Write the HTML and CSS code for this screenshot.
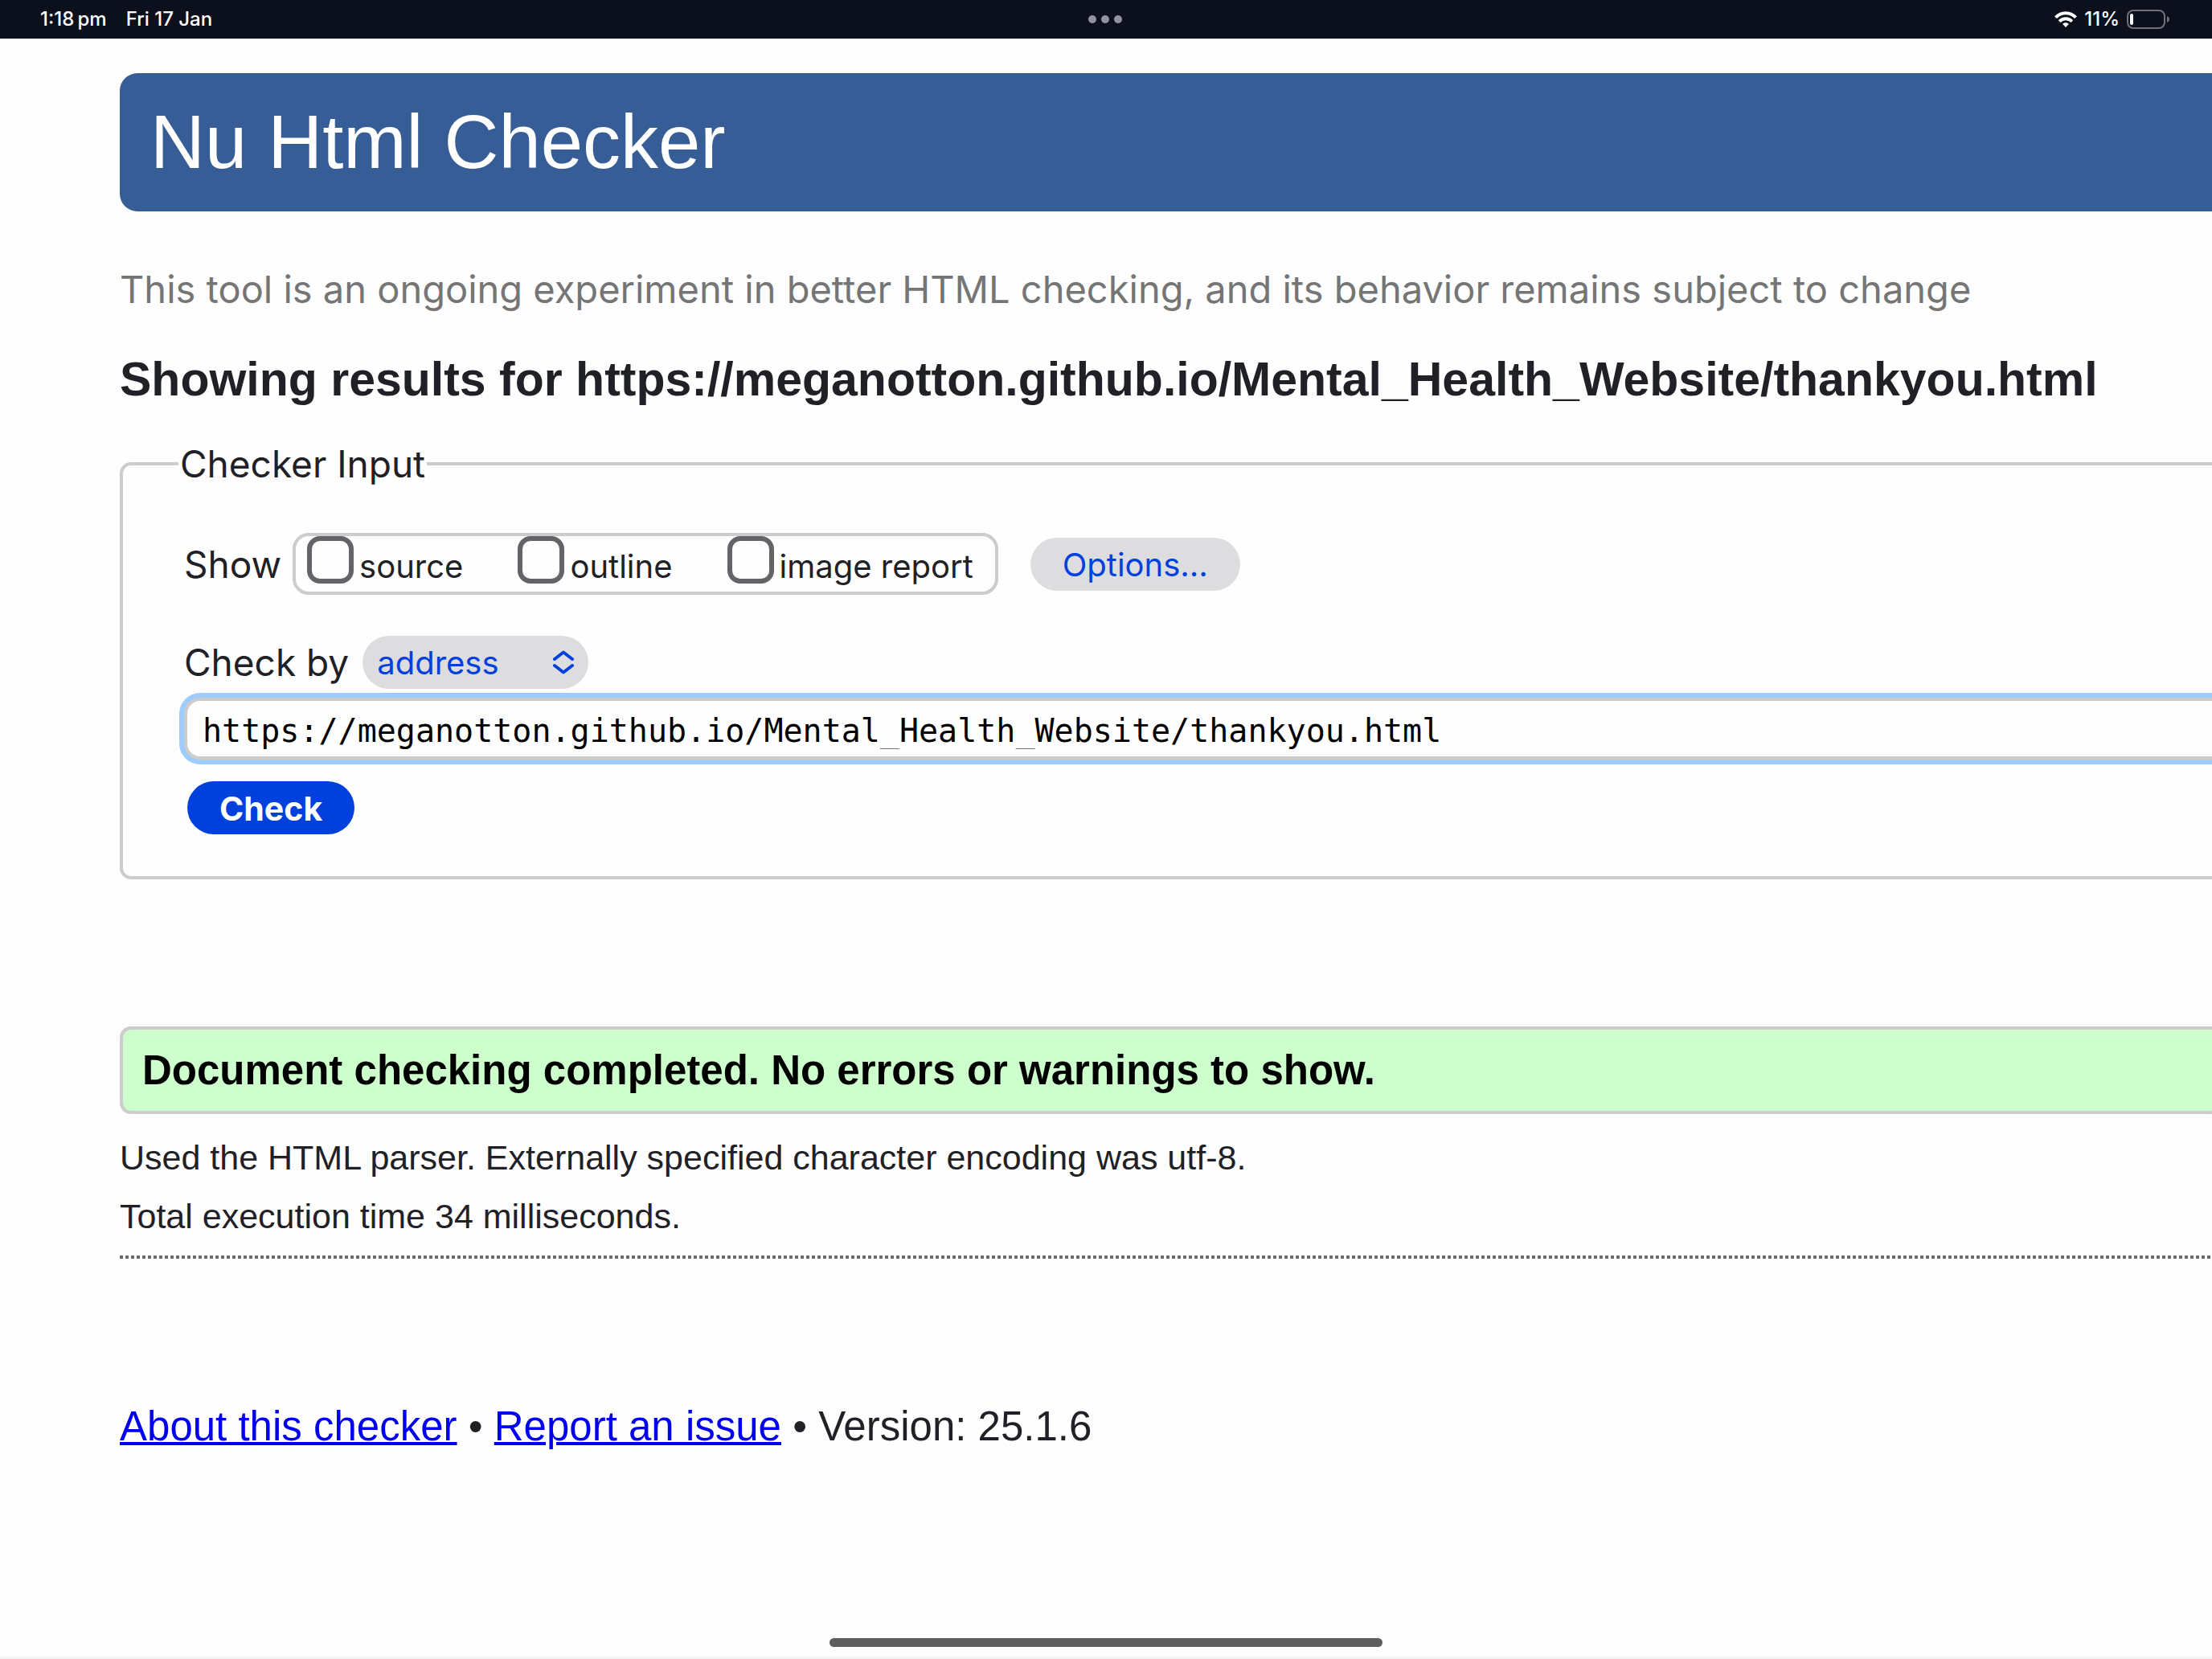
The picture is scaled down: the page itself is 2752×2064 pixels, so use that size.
FILE: index.html
```html
<!DOCTYPE html>
<html lang="en">
<head>
<meta charset="utf-8">
<title>Showing results for https://meganotton.github.io/Mental_Health_Website/thankyou.html - Nu Html Checker</title>
<link rel="stylesheet" href="styles.css">
</head>
<body>
<div class="status-bar">
  <div class="status-left"><span>1:18&#8201;pm</span><span>Fri 17 Jan</span></div>
  <div class="status-dots"><i class="dot"></i><i class="dot"></i><i class="dot"></i></div>
  <div class="status-right">
    <svg class="wifi" viewBox="0 0 28 20" aria-hidden="true">
      <g fill="none" stroke="#fff" stroke-width="4">
        <path d="M1.500 7.600C8.500 .4 19.500 .4 26.500 7.600"/>
        <path d="M6.200 12.600C10.600 8.200 17.400 8.200 21.800 12.600"/>
      </g>
      <path d="M14 20l-4-4.200c2.200-2.200 5.800-2.200 8 0z" fill="#fff"/>
    </svg>
    <span>11%</span>
    <svg class="battery" viewBox="0 0 54 24" aria-hidden="true">
      <rect x="1" y="1" width="46" height="22" rx="7" fill="none" stroke="#70727a" stroke-width="2"/>
      <rect x="4" y="5" width="4" height="14" rx="2" fill="#fff"/>
      <path d="M50 8c4 1.500 4 6.500 0 8z" fill="#70727a"/>
    </svg>
  </div>
</div>

<header class="banner"><h1>Nu Html Checker</h1></header>

<main class="content">
  <p class="tagline">This tool is an ongoing experiment in better HTML checking, and its behavior remains subject to change</p>
  <h2>Showing results for https://meganotton.github.io/Mental_Health_Website/thankyou.html</h2>

  <form>
    <fieldset class="checker">
      <legend>Checker Input</legend>
      <div class="row">
        <span class="row-label">Show</span>
        <div class="show-options">
          <label><input type="checkbox"><span>source</span></label>
          <label><input type="checkbox"><span>outline</span></label>
          <label><input type="checkbox"><span>image report</span></label>
        </div>
        <button class="pill options" type="button">Options…</button>
      </div>
      <div class="row check-by">
        <label class="row-label" for="docselect">Check by</label>
        <div class="select-wrap">
          <select id="docselect" class="pill">
            <option>address</option>
            <option>file upload</option>
            <option>text input</option>
          </select>
          <svg class="chevrons" viewBox="0 0 26 30" aria-hidden="true">
            <path d="M2 11L13 2.500L24 11M2 19L13 27.500L24 19" fill="none" stroke="#0040dd" stroke-width="4" stroke-linecap="round" stroke-linejoin="round"/>
          </svg>
        </div>
      </div>
      <input class="address" type="text" aria-label="Address" spellcheck="false" value="https://meganotton.github.io/Mental_Health_Website/thankyou.html">
      <button class="pill submit" type="submit">Check</button>
    </fieldset>
  </form>

  <p class="success">Document checking completed. No errors or warnings to show.</p>
  <div class="details">
    <p>Used the HTML parser. Externally specified character encoding was utf-8.</p>
    <p>Total execution time 34 milliseconds.</p>
  </div>
</main>

<footer class="footer"><a href="#about">About this checker</a> • <a href="#issue">Report an issue</a> • Version: 25.1.6</footer>
<div class="home-indicator"></div>
</body>
</html>
```
FILE: styles.css
```css
* {
  box-sizing: border-box;
}

body {
  display: flex;
  flex-direction: column;
  min-height: 100vh;
  margin: 0;
  background: #fefefe;
  box-shadow: inset 0 -4px 4px -2px #eee;
  color: #1f2126;
  font-family: "Liberation Sans", Arial, sans-serif;
  white-space: nowrap;
  overflow-x: hidden;
}

h1,
h2,
p {
  margin: 0;
}

.status-bar {
  display: grid;
  grid-template-columns: 1fr auto 1fr;
  align-items: center;
  height: 48px;
  padding: 0 52px 0 50px;
  background: #0c101c;
  color: #fff;
  font: 500 24px/48px Inter, sans-serif;
}

.status-left {
  display: flex;
  gap: 24px;
}

.status-dots {
  display: flex;
  gap: 6px;
}

.dot {
  width: 10px;
  height: 10px;
  border-radius: 50%;
  background: #9092a2;
}

.status-right {
  display: flex;
  align-items: center;
  justify-content: flex-end;
  gap: 9px;
}

.wifi {
  width: 28px;
  height: 20px;
}

.battery {
  width: 54px;
  height: 24px;
}

.banner {
  margin: 43px 0 0 149px;
  padding: 0 38px;
  border-radius: 22px 0 0 22px;
  background: #365d95;
  color: #fff;
}

h1 {
  font-size: 94px;
  font-weight: 400;
  line-height: 172px;
}

.content {
  margin-left: 149px;
}

.tagline {
  margin-top: 69px;
  color: #757575;
  font: 47px/56px Inter, sans-serif;
}

h2 {
  margin-top: 50px;
  font-size: 59px;
  line-height: 68px;
}

.checker {
  min-width: 0;
  margin: 43px 0 0;
  padding: 58px 0 52px 76px;
  border: 4px solid #ccc;
  border-right: 0;
  border-radius: 14px 0 0 14px;
  font: 46px/56px Inter, sans-serif;
}

legend {
  margin-left: -7px;
  padding: 0 2px;
}

.row {
  display: flex;
  align-items: center;
}

.show-options {
  display: flex;
  gap: 68px;
  height: 77px;
  margin-left: 14px;
  padding: 0 27px 0 14px;
  border: 4px solid #ccc;
  border-radius: 20px;
  font-size: 40px;
}

.show-options label {
  display: flex;
  gap: 7px;
  line-height: 75px;
}

.show-options input {
  appearance: none;
  width: 58px;
  height: 59px;
  margin: 0;
  border: 6px solid #636368;
  border-radius: 16px;
}

.pill {
  display: block;
  height: 66px;
  padding: 2px 40px 0;
  border: 0;
  border-radius: 33px;
  background: #dddde0;
  color: #0040dd;
  font: 40px/64px Inter, sans-serif;
}

.options {
  margin-left: 40px;
}

.check-by {
  margin-top: 51px;
}

.select-wrap {
  display: grid;
  align-items: center;
  margin-left: 17px;
}

.select-wrap > * {
  grid-area: 1 / 1;
}

select.pill {
  appearance: none;
  width: 281px;
  padding: 2px 18px 0;
}

.chevrons {
  justify-self: end;
  width: 26px;
  height: 30px;
  margin-right: 18px;
  pointer-events: none;
}

.address {
  display: block;
  width: 100%;
  height: 77px;
  margin: 11px 0 27px;
  padding: 4px 19px 0;
  border: 4px solid #ccc;
  border-right: 0;
  border-radius: 20px 0 0 20px;
  outline: 0;
  background: #fefefe;
  box-shadow: 0 0 0 6px #9fccff;
  color: #000;
  font: 40px "DejaVu Sans Mono", monospace;
}

.submit {
  margin-left: 4px;
  background: #0040dd;
  color: #fff;
  font-size: 41px;
  font-weight: 700;
}

.success {
  margin-top: 183px;
  padding: 16px 24px;
  border: 4px solid #ccc;
  border-right: 0;
  border-radius: 14px 0 0 14px;
  background: #cfc;
  color: #000;
  font-size: 51px;
  font-weight: 700;
  line-height: 69px;
}

.details {
  margin-top: 18px;
  font-size: 43px;
  line-height: 73px;
}

.details::after {
  content: "";
  display: block;
  height: 4px;
  margin-top: 12px;
  background: repeating-linear-gradient(90deg, #6a6a6e 0 4px, transparent 4px 7px);
}

.footer {
  margin: 179px 0 0 149px;
  font-size: 51px;
  line-height: 60px;
}

.footer a {
  color: #00e;
  text-decoration-thickness: 4px;
}

.home-indicator {
  width: 25%;
  height: 11px;
  margin: auto auto 15px;
  border-radius: 6px;
  background: #5f5f5f;
}
```
